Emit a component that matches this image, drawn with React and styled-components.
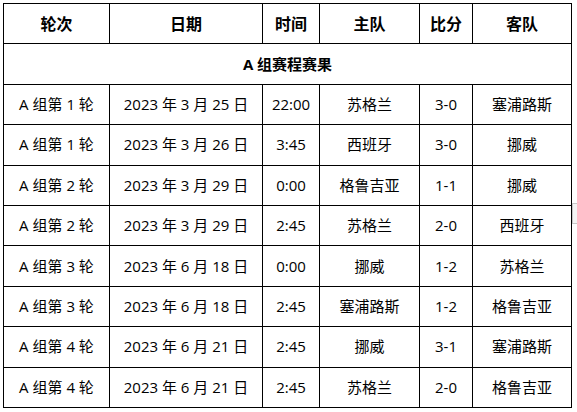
import React from 'react';
import styled, { createGlobalStyle } from 'styled-components';

const GlobalStyle = createGlobalStyle`
  body {
    margin: 0;
    padding: 3px;
    background: #ffffff;
    font-family: "Open Sans", "Noto Sans CJK SC", sans-serif;
    color: #000000;
  }
`;

const Table = styled.table`
  border-collapse: collapse;
  table-layout: fixed;
  width: 568px;
`;

const Cell = styled.td`
  border: 1px solid #000000;
  height: 39.4px;
  padding: 0;
  text-align: center;
  vertical-align: middle;
  font-size: 15px;
  font-weight: ${(p) => (p.$bold ? 700 : 400)};
  line-height: 1;
`;

const HeadCell = styled(Cell).attrs({ as: 'th' })`
  font-size: 16px;
  font-weight: 700;
`;

const ScrollMark = styled.div`
  position: fixed;
  right: 0;
  top: 203px;
  width: 4px;
  height: 19px;
  border: 1px solid #c8c8c8;
  border-right: none;
  background: #f4f4f4;
`;

const widths = [106, 153, 57, 100, 53, 99];
const headers = ['轮次', '日期', '时间', '主队', '比分', '客队'];

const matches = [
  ['A 组第 1 轮', '2023 年 3 月 25 日', '22:00', '苏格兰', '3-0', '塞浦路斯'],
  ['A 组第 1 轮', '2023 年 3 月 26 日', '3:45', '西班牙', '3-0', '挪威'],
  ['A 组第 2 轮', '2023 年 3 月 29 日', '0:00', '格鲁吉亚', '1-1', '挪威'],
  ['A 组第 2 轮', '2023 年 3 月 29 日', '2:45', '苏格兰', '2-0', '西班牙'],
  ['A 组第 3 轮', '2023 年 6 月 18 日', '0:00', '挪威', '1-2', '苏格兰'],
  ['A 组第 3 轮', '2023 年 6 月 18 日', '2:45', '塞浦路斯', '1-2', '格鲁吉亚'],
  ['A 组第 4 轮', '2023 年 6 月 21 日', '2:45', '挪威', '3-1', '塞浦路斯'],
  ['A 组第 4 轮', '2023 年 6 月 21 日', '2:45', '苏格兰', '2-0', '格鲁吉亚'],
];

export default function App() {
  return (
    <>
      <GlobalStyle />
      <Table>
        <colgroup>
          {widths.map((w, i) => (
            <col key={i} style={{ width: w }} />
          ))}
        </colgroup>
        <thead>
          <tr>
            {headers.map((h) => (
              <HeadCell key={h}>{h}</HeadCell>
            ))}
          </tr>
        </thead>
        <tbody>
          <tr>
            <Cell colSpan={6} $bold>
              A 组赛程赛果
            </Cell>
          </tr>
          {matches.map((row, i) => (
            <tr key={i}>
              {row.map((v, j) => (
                <Cell key={j}>{v}</Cell>
              ))}
            </tr>
          ))}
        </tbody>
      </Table>
      <ScrollMark />
    </>
  );
}
